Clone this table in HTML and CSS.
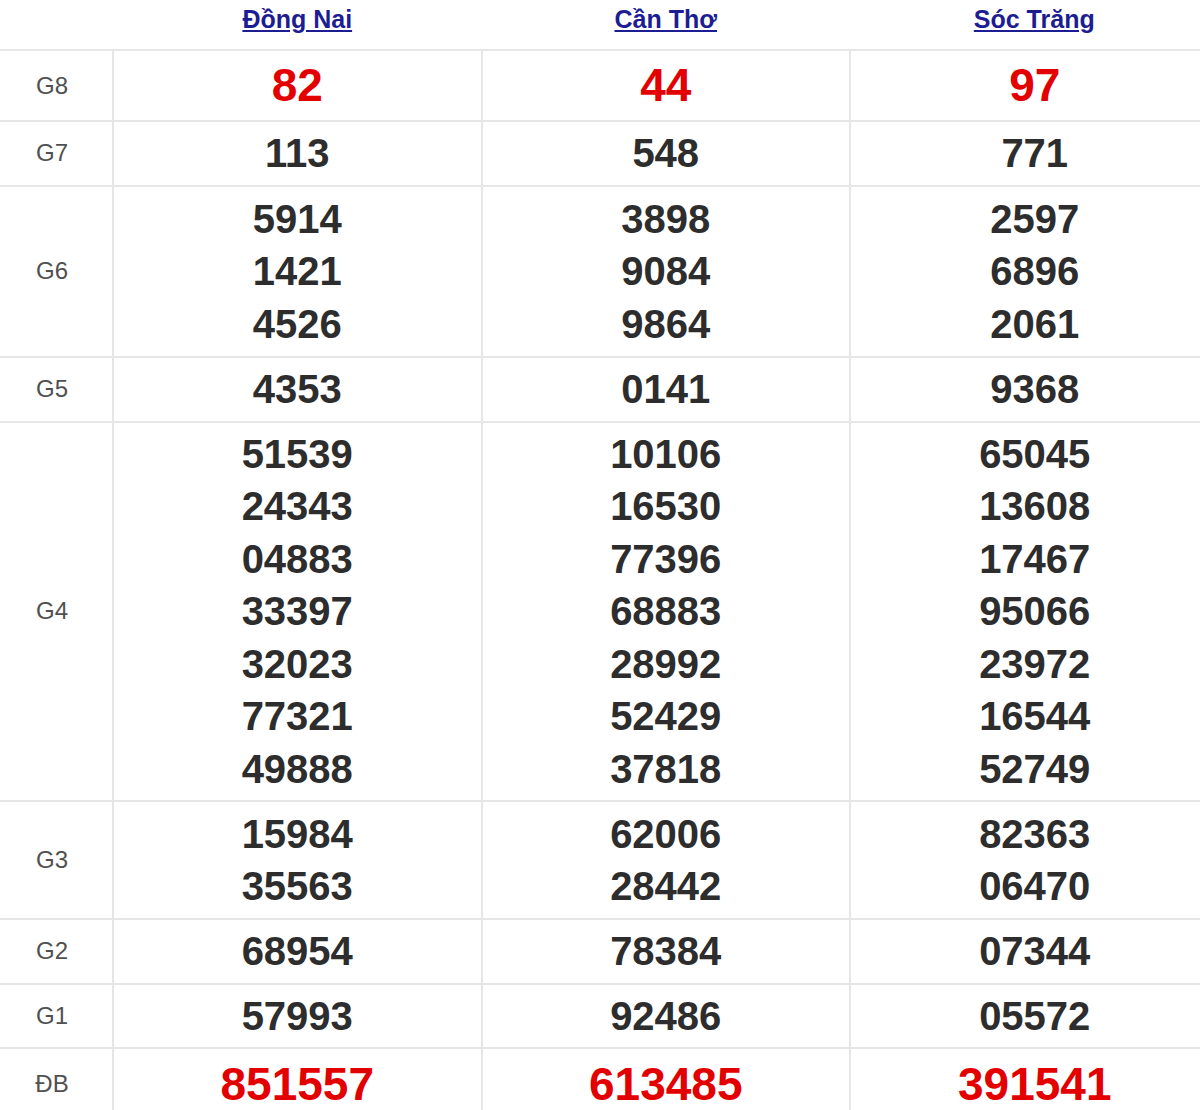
FILE: index.html
```html
<!DOCTYPE html>
<html lang="vi">
<head>
<meta charset="utf-8">
<title>Kết quả xổ số</title>
<link rel="stylesheet" href="styles.css">
</head>
<body>
<table class="kq">
  <colgroup>
    <col class="c-label">
    <col class="c-prov">
    <col class="c-prov">
    <col class="c-prov">
  </colgroup>
  <thead>
    <tr class="head">
      <th></th>
      <th><a href="#">Đồng Nai</a></th>
      <th><a href="#">Cần Thơ</a></th>
      <th><a href="#">Sóc Trăng</a></th>
    </tr>
  </thead>
  <tbody>
    <tr class="g8">
      <td class="lbl">G8</td>
      <td><div class="n red">82</div></td>
      <td><div class="n red">44</div></td>
      <td><div class="n red">97</div></td>
    </tr>
    <tr>
      <td class="lbl">G7</td>
      <td><div class="n">113</div></td>
      <td><div class="n">548</div></td>
      <td><div class="n">771</div></td>
    </tr>
    <tr class="g6">
      <td class="lbl">G6</td>
      <td><div class="n">5914</div><div class="n">1421</div><div class="n">4526</div></td>
      <td><div class="n">3898</div><div class="n">9084</div><div class="n">9864</div></td>
      <td><div class="n">2597</div><div class="n">6896</div><div class="n">2061</div></td>
    </tr>
    <tr>
      <td class="lbl">G5</td>
      <td><div class="n">4353</div></td>
      <td><div class="n">0141</div></td>
      <td><div class="n">9368</div></td>
    </tr>
    <tr>
      <td class="lbl">G4</td>
      <td><div class="n">51539</div><div class="n">24343</div><div class="n">04883</div><div class="n">33397</div><div class="n">32023</div><div class="n">77321</div><div class="n">49888</div></td>
      <td><div class="n">10106</div><div class="n">16530</div><div class="n">77396</div><div class="n">68883</div><div class="n">28992</div><div class="n">52429</div><div class="n">37818</div></td>
      <td><div class="n">65045</div><div class="n">13608</div><div class="n">17467</div><div class="n">95066</div><div class="n">23972</div><div class="n">16544</div><div class="n">52749</div></td>
    </tr>
    <tr class="g3">
      <td class="lbl">G3</td>
      <td><div class="n">15984</div><div class="n">35563</div></td>
      <td><div class="n">62006</div><div class="n">28442</div></td>
      <td><div class="n">82363</div><div class="n">06470</div></td>
    </tr>
    <tr>
      <td class="lbl">G2</td>
      <td><div class="n">68954</div></td>
      <td><div class="n">78384</div></td>
      <td><div class="n">07344</div></td>
    </tr>
    <tr>
      <td class="lbl">G1</td>
      <td><div class="n">57993</div></td>
      <td><div class="n">92486</div></td>
      <td><div class="n">05572</div></td>
    </tr>
    <tr class="db">
      <td class="lbl">ĐB</td>
      <td><div class="n red">851557</div></td>
      <td><div class="n red">613485</div></td>
      <td><div class="n red">391541</div></td>
    </tr>
  </tbody>
</table>
</body>
</html>
```

FILE: styles.css
```css
html, body {
  margin: 0;
  padding: 0;
  overflow: hidden;
  background: #ffffff;
}

body {
  font-family: "Liberation Sans", Arial, sans-serif;
  color: #333333;
}

.kq {
  border-collapse: collapse;
  table-layout: fixed;
  width: 1218.5px;
}

.c-label { width: 113px; }
.c-prov { width: 368.5px; }

.head th {
  padding: 4px 0 15px;
  line-height: 30px;
  font-size: 25px;
  font-weight: bold;
  text-align: center;
  border-bottom: 2px solid #e6e6e6;
}

.head a {
  color: #1d1d93;
  text-decoration: underline;
}

tbody td {
  padding: 5px 0;
  text-align: center;
  vertical-align: middle;
  border-bottom: 2px solid #e6e6e6;
  border-left: 2px solid #e6e6e6;
}

.g6 td { padding: 6px 0; }
.g3 td { padding: 5.5px 0; }

tbody td.lbl {
  border-left: none;
  padding-right: 8px;
  font-size: 24px;
  color: #505050;
}

.n {
  font-size: 40px;
  font-weight: bold;
  line-height: 52.5px;
  color: #2d2d2d;
}

.n.red {
  color: #e30000;
  font-size: 46px;
  line-height: 59px;
}

.db .n.red {
  line-height: 60px;
}
```
